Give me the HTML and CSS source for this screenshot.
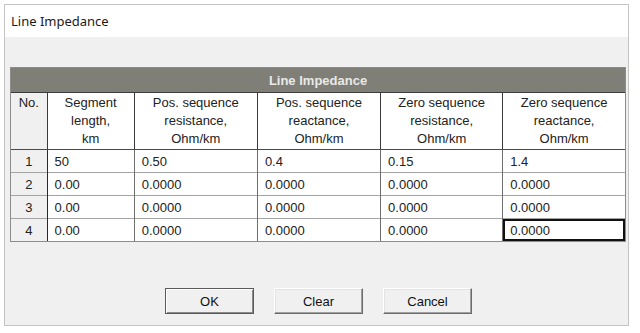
FILE: index.html
```html
<!DOCTYPE html>
<html>
<head>
<meta charset="utf-8">
<link rel="stylesheet" href="styles.css">
</head>
<body>
<div class="window">
  <div class="titlebar">Line Impedance</div>
  <div class="content">
    <div class="grid-frame">
      <table class="grid">
        <colgroup>
          <col class="c-no"><col class="c-len"><col class="c-w"><col class="c-w"><col class="c-w2"><col class="c-w2">
        </colgroup>
        <thead>
          <tr class="band"><th colspan="6">Line Impedance</th></tr>
          <tr class="heads">
            <th>No.</th>
            <th>Segment<br>length,<br>km</th>
            <th>Pos. sequence<br>resistance,<br>Ohm/km</th>
            <th>Pos. sequence<br>reactance,<br>Ohm/km</th>
            <th>Zero sequence<br>resistance,<br>Ohm/km</th>
            <th>Zero sequence<br>reactance,<br>Ohm/km</th>
          </tr>
        </thead>
        <tbody>
          <tr><td class="no">1</td><td>50</td><td>0.50</td><td>0.4</td><td>0.15</td><td>1.4</td></tr>
          <tr><td class="no">2</td><td>0.00</td><td>0.0000</td><td>0.0000</td><td>0.0000</td><td>0.0000</td></tr>
          <tr><td class="no">3</td><td>0.00</td><td>0.0000</td><td>0.0000</td><td>0.0000</td><td>0.0000</td></tr>
          <tr><td class="no">4</td><td>0.00</td><td>0.0000</td><td>0.0000</td><td>0.0000</td><td class="focus">0.0000</td></tr>
        </tbody>
      </table>
    </div>
    <div class="buttons">
      <button class="btn default">OK</button>
      <button class="btn">Clear</button>
      <button class="btn">Cancel</button>
    </div>
  </div>
</div>
</body>
</html>
```

FILE: styles.css
```css
html, body {
  margin: 0;
  padding: 0;
  background: #ffffff;
}

.window {
  margin: 4px 0 0 4px;
  width: 623px;
  height: 320px;
  border: 1px solid #c4c4c4;
  background: #f0f0f0;
  display: flex;
  flex-direction: column;
}

.titlebar {
  height: 32px;
  background: #ffffff;
  font-family: "Noto Sans", "Open Sans", sans-serif;
  font-size: 13px;
  color: #1a1a1a;
  line-height: 32px;
  padding-left: 6px;
}

.content {
  flex: 1;
  padding: 30px 3px 0 5px;
  display: flex;
  flex-direction: column;
}

.grid-frame {
  width: 614px;
  border: 1px solid #8c8c8c;
  background: #ffffff;
}

.grid {
  width: 614px;
  border-collapse: collapse;
  table-layout: fixed;
  font-family: "Liberation Sans", Arial, sans-serif;
  font-size: 13px;
  color: #222;
}

.c-no { width: 36px; }
.c-len { width: 87px; }
.c-w { width: 123px; }
.c-w2 { width: 122px; }

.band th {
  height: 24px;
  padding: 0;
  background: #7f7f77;
  color: #e9e9e9;
  font-weight: bold;
  font-size: 13px;
  text-align: center;
  border-bottom: 1px solid #3c3c3c;
}

.heads th {
  height: 55px;
  padding: 0;
  font-weight: normal;
  line-height: 18px;
  text-align: center;
  vertical-align: middle;
  background: #ffffff;
  border-left: 1px solid #3a3a3a;
  border-bottom: 1px solid #4a4a4a;
}

.heads th:first-child {
  border-left: none;
  background: #f0f0f0;
  vertical-align: top;
  padding-top: 1px;
}

.grid td {
  height: 22px;
  padding: 0 0 0 7px;
  background: #ffffff;
  border-left: 1px solid #6e6e6e;
  border-top: 1px solid #a4a4a4;
  white-space: nowrap;
}

.grid tbody tr:first-child td {
  border-top: none;
}

.grid td.no {
  padding: 0;
  text-align: center;
  background: #f0f0f0;
  border-left: none;
  border-right: 1px solid #2a2a2a;
}

.grid td.focus {
  outline: 2px solid #111;
  outline-offset: -2px;
}

.buttons {
  display: flex;
  justify-content: center;
  gap: 20px;
  margin-top: 46px;
  padding-left: 2px;
}

.btn {
  width: 89px;
  height: 26px;
  padding: 0;
  font-family: "Liberation Sans", Arial, sans-serif;
  font-size: 13px;
  color: #111;
  background: #f0f0f0;
  border-top: 1px solid #ffffff;
  border-left: 1px solid #ffffff;
  border-right: 1px solid #6b6b6b;
  border-bottom: 1px solid #6b6b6b;
  box-shadow: inset -1px -1px 0 #a0a0a0, inset 1px 1px 0 #e3e3e3;
}

.btn.default {
  border: 1px solid #5a5a5a;
  box-shadow: inset 1px 1px 0 #ffffff, inset -1px -1px 0 #8a8a8a;
}
```
